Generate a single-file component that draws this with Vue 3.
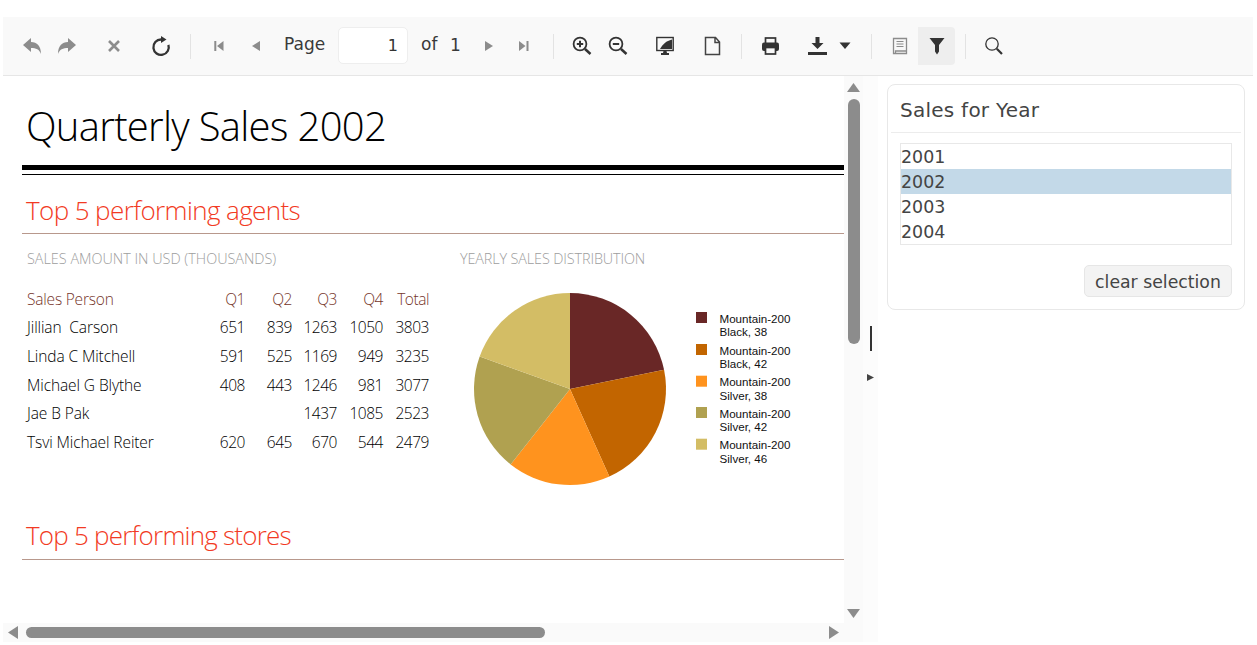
<script setup>
const agents = [
  ['Jillian  Carson', 651, 839, 1263, 1050, 3803],
  ['Linda C Mitchell', 591, 525, 1169, 949, 3235],
  ['Michael G Blythe', 408, 443, 1246, 981, 3077],
  ['Jae B Pak', '', '', 1437, 1085, 2523],
  ['Tsvi Michael Reiter', 620, 645, 670, 544, 2479],
]
const cx = 110, cy = 109, r = 96
const stops = [0, 78.5, 155.8, 218.2, 289.8, 360]
const point = (deg) => {
  const a = (deg * Math.PI) / 180
  return `${(cx + r * Math.sin(a)).toFixed(2)} ${(cy - r * Math.cos(a)).toFixed(2)}`
}
const series = [
  { color: '#692726', a: 'Mountain-200', b: 'Black, 38', box: 32, y1: 43, y2: 56 },
  { color: '#c26500', a: 'Mountain-200', b: 'Black, 42', box: 64, y1: 75, y2: 88 },
  { color: '#ff931e', a: 'Mountain-200', b: 'Silver, 38', box: 95.7, y1: 106, y2: 120 },
  { color: '#b0a150', a: 'Mountain-200', b: 'Silver, 42', box: 127, y1: 138, y2: 151 },
  { color: '#d3bd65', a: 'Mountain-200', b: 'Silver, 46', box: 158.7, y1: 169, y2: 183 },
].map((s, i) => ({
  ...s,
  d: `M${cx} ${cy} L${point(stops[i])} A${r} ${r} 0 0 1 ${point(stops[i + 1])} Z`,
}))
const years = [2001, 2002, 2003, 2004]
</script>

<template>
  <div class="page">
    <header class="toolbar">
      <button class="btn off ml-11" aria-label="Back"><svg viewBox="0 0 24 24"><path d="M3 11 11 4V8C17 8 21 12 21 20 19.5 15.5 16 14 11 14V18Z" /></svg></button>
      <button class="btn off ml-n1" aria-label="Forward"><svg viewBox="0 0 24 24"><path d="M21 11 13 4V8C7 8 3 12 3 20 4.5 15.5 8 14 13 14V18Z" /></svg></button>
      <button class="btn off ml-11" aria-label="Stop"><svg viewBox="0 0 24 24"><path class="line" d="M7 7 17 17M17 7 7 17" stroke-width="2.6" /></svg></button>
      <button class="btn ml-11" aria-label="Refresh"><svg viewBox="0 0 24 24"><path class="line" d="M12 5.5A7.7 7.7 0 1 0 19.4 10.8" stroke-width="2.3" /><path d="M12 2 17.5 5.5 12 9Z" /></svg></button>
      <span class="sep ml-11"></span>
      <button class="btn off ml-10" aria-label="First page"><svg viewBox="0 0 24 24"><rect x="7.3" y="7" width="2" height="10" /><path d="M10 12 16.5 7V17Z" /></svg></button>
      <button class="btn off" aria-label="Previous page"><svg viewBox="0 0 24 24"><path d="M9 12 17 7V17Z" /></svg></button>
      <span class="label page-label ml-11">Page</span>
      <span class="page-input">1</span>
      <span class="label of-label">of</span>
      <span class="label num-label">1</span>
      <button class="btn off ml-11" aria-label="Next page"><svg viewBox="0 0 24 24"><path d="M8 7 16 12 8 17Z" /></svg></button>
      <button class="btn off ml-n2" aria-label="Last page"><svg viewBox="0 0 24 24"><path d="M8 7 14.5 12 8 17Z" /><rect x="15.5" y="7" width="2" height="10" /></svg></button>
      <span class="sep ml-12"></span>
      <button class="btn ml-10" aria-label="Zoom in"><svg viewBox="0 0 24 24"><circle class="line" cx="10" cy="10" r="6.4" stroke-width="1.8" /><path class="line" d="M15 15 20.5 20" stroke-width="2.5" /><path class="line" d="M6.8 10H13.2M10 6.8V13.2" stroke-width="2" /></svg></button>
      <button class="btn" aria-label="Zoom out"><svg viewBox="0 0 24 24"><circle class="line" cx="10" cy="10" r="6.4" stroke-width="1.8" /><path class="line" d="M15 15 20.5 20" stroke-width="2.5" /><path class="line" d="M6.8 10H13.2" stroke-width="2" /></svg></button>
      <button class="btn ml-11" aria-label="Page view"><svg viewBox="0 0 24 24"><rect class="line" x="3.8" y="3.5" width="16.4" height="13" stroke-width="1.4" /><path d="M7 15C10 10 13 7 19 5.5V15Z" /><path d="M10.5 17H13.5L14 19H16V21H8V19H10Z" /></svg></button>
      <button class="btn ml-11" aria-label="Page setup"><svg viewBox="0 0 24 24"><path class="line thin" d="M5.5 3.5H15.5L19.5 8V20.5H5.5ZM15 3.5V8.5H19.5" stroke-width="1.5" /></svg></button>
      <span class="sep ml-11"></span>
      <button class="btn ml-10" aria-label="Print"><svg viewBox="0 0 24 24"><rect class="line" x="7.5" y="4" width="10" height="6" stroke-width="1.7" /><rect x="4" y="8.5" width="17" height="8.5" rx="2" /><rect class="paper" x="7.5" y="13.5" width="10" height="6.5" stroke-width="1.7" /></svg></button>
      <button class="btn ml-11" aria-label="Export"><svg viewBox="0 0 24 24"><path d="M10.5 3H14.5V9H18.5L12.5 15 6.5 9H10.5Z" /><rect x="3" y="18" width="19" height="3" /></svg></button>
      <button class="btn ml-n8" aria-label="Export menu"><svg viewBox="0 0 24 24"><path d="M6.5 8.5H17.5L12 15Z" /></svg></button>
      <span class="sep ml-8"></span>
      <button class="btn ml-10 muted" aria-label="Document map"><svg viewBox="0 0 24 24"><path class="line" d="M5.5 4.5H18.5V19.5H5.5ZM7.5 19.5V17H18.5" stroke-width="1.3" /><path class="line" d="M8.5 7.5H15.5M8.5 10H15.5M8.5 12.5H15.5" stroke-width="1" /></svg></button>
      <button class="btn active" aria-label="Parameters"><svg viewBox="0 0 24 24"><path d="M4.5 4H19.5L14 11V17.5L12 20.5 10 17.5V11Z" /></svg></button>
      <span class="sep ml-10"></span>
      <button class="btn ml-10" aria-label="Search"><svg viewBox="0 0 24 24"><circle class="line" cx="10" cy="10" r="6.2" stroke-width="1.3" /><path class="line" d="M14.8 14.8 20 20" stroke-width="2.2" /></svg></button>
    </header>

    <main class="main">
      <div class="viewer">
        <section class="report">
          <h1 class="title">Quarterly Sales 2002</h1>
          <div class="title-rule"></div>
          <h2 class="heading agents-heading">Top 5 performing agents</h2>
          <div class="columns">
            <div class="col-table">
              <h3 class="sublabel">SALES AMOUNT IN USD (THOUSANDS)</h3>
              <div class="table">
                <div class="row head">
                  <span class="name">Sales Person</span>
                  <span class="num">Q1</span><span class="num">Q2</span><span class="num">Q3</span><span class="num">Q4</span><span class="num">Total</span>
                </div>
                <div v-for="a in agents" :key="a[0]" class="row">
                  <span class="name">{{ a[0] }}</span>
                  <span v-for="(v, i) in a.slice(1)" :key="i" class="num">{{ v }}</span>
                </div>
              </div>
            </div>
            <div class="col-chart">
              <h3 class="sublabel">YEARLY SALES DISTRIBUTION</h3>
              <svg class="chart" viewBox="0 0 380 210" width="380" height="210">
                <path v-for="s in series" :key="s.color + 'p'" :d="s.d" :fill="s.color" />
                <g v-for="s in series" :key="s.color">
                  <rect x="236" :y="s.box" width="11" height="11" :fill="s.color" />
                  <text x="259.5" :y="s.y1">{{ s.a }}</text>
                  <text x="259.5" :y="s.y2">{{ s.b }}</text>
                </g>
              </svg>
            </div>
          </div>
          <h2 class="heading stores-heading">Top 5 performing stores</h2>
        </section>
        <div class="vbar">
          <svg class="arrow" viewBox="0 0 13 9" width="13" height="9"><path d="M6.5 0 13 9H0Z" /></svg>
          <div class="vthumb"></div>
          <svg class="arrow down" viewBox="0 0 13 9" width="13" height="9"><path d="M0 0H13L6.5 9Z" /></svg>
        </div>
        <div class="hbar">
          <svg class="arrow" viewBox="0 0 10 13" width="10" height="13"><path d="M0 6.5 10 0V13Z" /></svg>
          <div class="hthumb"></div>
          <svg class="arrow right" viewBox="0 0 10 13" width="10" height="13"><path d="M0 0 10 6.5 0 13Z" /></svg>
        </div>
        <div class="corner"></div>
      </div>

      <div class="splitter">
        <span class="grip"></span>
        <svg class="collapse" viewBox="0 0 7 7" width="7" height="7"><path d="M0 0 7 3.5 0 7Z" /></svg>
      </div>

      <aside class="side">
        <div class="card">
          <div class="card-title">Sales for Year</div>
          <div class="card-body">
            <div class="list">
              <div v-for="y in years" :key="y" class="option" :class="{ selected: y === 2002 }">{{ y }}</div>
            </div>
            <div class="actions"><button class="clear">clear selection</button></div>
          </div>
        </div>
      </aside>
    </main>
  </div>
</template>

<style scoped>
.page {
  box-sizing: border-box;
  width: 1257px;
  height: 645px;
  padding: 17px 4px 3px 3px;
  display: flex;
  flex-direction: column;
  overflow: hidden;
  background: #fff;
}
.toolbar {
  flex: none;
  height: 58px;
  box-sizing: content-box;
  display: flex;
  align-items: center;
  background: #f9f9f9;
  border-bottom: 1px solid #e6e6e6;
  font-family: "DejaVu Sans", sans-serif;
  color: #333;
}
.btn {
  flex: none;
  width: 36px;
  height: 38px;
  padding: 0;
  border: 0;
  background: transparent;
  display: flex;
  align-items: center;
  justify-content: center;
  fill: #333;
  color: #333;
}
.btn svg { width: 24px; height: 24px; }
.btn .line { fill: none; stroke: currentColor; }
.btn .thin { color: #444; }
.btn .paper { fill: #f9f9f9; stroke: #333; }
.btn.off { fill: #8c8c8c; color: #8c8c8c; }
.btn.muted { fill: #8c8c8c; color: #8c8c8c; }
.btn.active { width: 37px; background: #eee; border-radius: 0 4px 4px 0; }
.sep { flex: none; width: 1px; height: 25px; background: #e3e3e3; }
.ml-8 { margin-left: 8px; }
.ml-10 { margin-left: 10px; }
.ml-11 { margin-left: 11px; }
.ml-12 { margin-left: 12px; }
.ml-n1 { margin-left: -1px; }
.ml-n2 { margin-left: -2px; }
.ml-n8 { margin-left: -8px; }
.label { flex: none; font-size: 17px; line-height: 20px; margin-bottom: 4px; color: #3a3a3a; }
.page-label { width: 42px; }
.page-input {
  flex: none;
  box-sizing: border-box;
  width: 70px;
  height: 37px;
  margin-left: 12px;
  margin-bottom: 1px;
  padding-right: 9px;
  background: #fff;
  border: 1px solid #eee;
  border-radius: 5px;
  text-align: right;
  font-size: 16px;
  line-height: 35px;
}
.of-label { width: 17px; margin-left: 13px; }
.num-label { width: 10px; margin-left: 12px; margin-bottom: 3px; }

.main { flex: 1; min-height: 0; display: flex; }
.viewer {
  flex: none;
  width: 860px;
  display: grid;
  grid-template-columns: 841px 19px;
  grid-template-rows: 547px 19px;
}
.report {
  overflow: hidden;
  padding-left: 19px;
  background: #fff;
  font-family: "Open Sans", sans-serif;
  font-weight: 300;
}
.title {
  margin: 22px 0 0;
  padding-left: 4px;
  font-size: 40px;
  font-weight: 300;
  letter-spacing: -0.7px;
  line-height: 56px;
  color: #000;
}
.title-rule {
  margin-top: 11px;
  padding-top: 4px;
  border-top: 5px solid #000;
  border-bottom: 1px solid #000;
}
.heading {
  padding: 0 0 5px 4px;
  font-size: 26px;
  font-weight: 300;
  letter-spacing: -0.6px;
  line-height: 36px;
  color: #f23a23;
  border-bottom: 1px solid #b8988c;
}
.agents-heading { margin: 17px 0 0; }
.stores-heading { margin: 26px 0 0; padding-bottom: 6px; letter-spacing: -0.78px; }
.columns { display: flex; height: 242px; margin-top: 15px; }
.col-table { flex: none; width: 438px; }
.col-chart { flex: 1; min-width: 0; }
.sublabel {
  margin: 0;
  padding-left: 5px;
  font-size: 14.4px;
  font-weight: 300;
  line-height: 20px;
  color: #9d9d9d;
}
.col-chart .sublabel { padding-left: 0; letter-spacing: -0.12px; }
.table { margin-top: 15.6px; padding-left: 5px; }
.row {
  display: grid;
  grid-template-columns: 178px 40px 47px 45px 46px 46px;
  font-size: 15.5px;
  line-height: 28.7px;
  color: #000;
  text-align: right;
}
.row .name { text-align: left; white-space: pre; letter-spacing: -0.1px; }
.row .num { letter-spacing: -0.45px; }
.head { color: #75352a; }
.row.head .name { letter-spacing: -0.2px; }
.chart { display: block; margin-top: 11px; overflow: visible; }
.chart text { font-family: "Liberation Sans", sans-serif; font-size: 11.6px; font-weight: 400; fill: #111; }

.vbar {
  display: flex;
  flex-direction: column;
  align-items: center;
  background: #fafafa;
  padding-top: 7px;
}
.arrow { display: block; flex: none; fill: #8c8c8c; }
.vthumb { width: 12px; height: 245px; margin-top: 7px; border-radius: 6px; background: #8c8c8c; }
.down { margin-top: auto; margin-bottom: 5px; }
.hbar {
  display: flex;
  align-items: center;
  padding-left: 5px;
  background: #fafafa;
}
.hthumb { width: 519px; height: 11px; margin-left: 8px; border-radius: 6px; background: #8c8c8c; }
.right { margin-left: auto; margin-right: 5px; }
.corner { background: #fafafa; }
.splitter {
  flex: none;
  position: relative;
  width: 15px;
  background: #fcfcfc;
}
.grip { position: absolute; left: 7px; top: 250px; width: 2px; height: 25px; background: #333; }
.collapse { position: absolute; left: 4px; top: 298px; fill: #444; }
.side { flex: 1; min-width: 0; padding: 8px 8px 0 9px; font-family: "DejaVu Sans", sans-serif; color: #444; }
.card {
  box-sizing: border-box;
  height: 226px;
  border: 1px solid #e8e8e8;
  border-radius: 8px;
  background: #fff;
  padding: 0 3px;
}
.card-title {
  height: 47px;
  padding-left: 9px;
  border-bottom: 1px solid #ececec;
  font-size: 20px;
  letter-spacing: 0.25px;
  line-height: 50px;
}
.card-body { padding: 10px 9px 0; }
.list { border: 1px solid #e8e8e8; height: 100px; }
.option { height: 25px; font-size: 17.4px; line-height: 27px; color: #444; }
.option.selected { background: #c3d9e8; }
.actions { display: flex; justify-content: flex-end; margin-top: 20px; }
.clear {
  width: 148px;
  height: 32px;
  padding: 2px 0 0;
  background: #f3f3f3;
  border: 1px solid #e6e6e6;
  border-radius: 5px;
  font-family: "DejaVu Sans", sans-serif;
  font-size: 17.3px;
  color: #444;
}
</style>
